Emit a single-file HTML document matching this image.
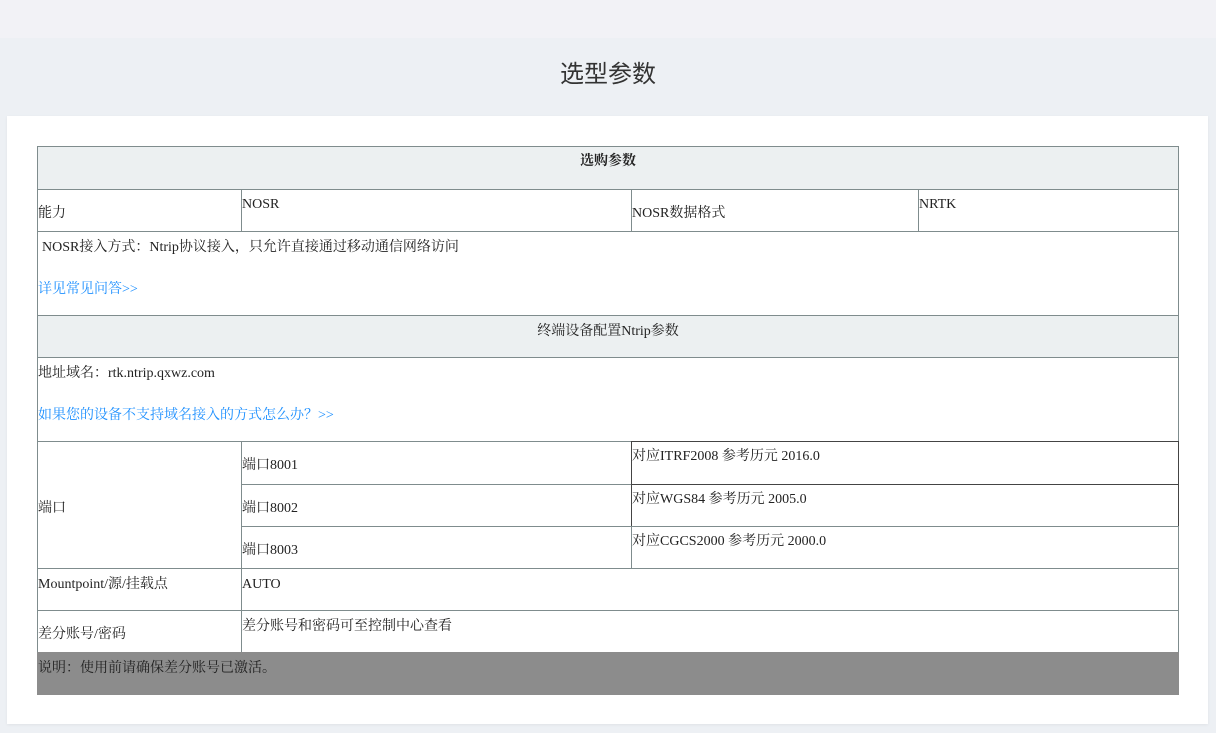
<!DOCTYPE html>
<html><head><meta charset="utf-8"><style>
body{margin:0;width:1216px;height:733px;background:#edf0f4;position:relative;overflow:hidden;font-family:"Liberation Serif","Noto Serif CJK SC",serif;font-size:14px;color:#222}
.a{position:absolute}
.top{left:0;top:0;width:1216px;height:38px;background:#f2f2f6}
.card{left:7px;top:116px;width:1201px;height:608px;background:#fff;box-shadow:0 1px 3px rgba(0,0,0,.06)}
.h{left:0;top:38px;width:1216px;height:78px;text-align:center;font:24px "Liberation Sans","Noto Sans CJK SC",sans-serif;line-height:74px;color:#333}
.bx{position:absolute;border:1px solid #7f8c8d;box-sizing:border-box}
.t{position:absolute;white-space:nowrap;line-height:16px;padding-top:2px}
.l{color:#1e90ff}
</style></head><body>
<div class="a top"></div>
<div class="a h">选型参数</div>
<div class="a card"></div>
<div class="bx" style="left:37px;top:146px;width:1142px;height:44px;background:#ecf0f1"></div>
<div class="bx" style="left:37px;top:189px;width:205px;height:43px"></div>
<div class="bx" style="left:241px;top:189px;width:391px;height:43px"></div>
<div class="bx" style="left:631px;top:189px;width:288px;height:43px"></div>
<div class="bx" style="left:918px;top:189px;width:261px;height:43px"></div>
<div class="bx" style="left:37px;top:231px;width:1142px;height:85px"></div>
<div class="bx" style="left:37px;top:315px;width:1142px;height:43px;background:#ecf0f1"></div>
<div class="bx" style="left:37px;top:357px;width:1142px;height:85px"></div>
<div class="bx" style="left:37px;top:441px;width:205px;height:128px"></div>
<div class="bx" style="left:241px;top:441px;width:391px;height:44px"></div>
<div class="bx" style="left:241px;top:484px;width:391px;height:43px"></div>
<div class="bx" style="left:241px;top:526px;width:391px;height:43px"></div>
<div class="bx" style="left:631px;top:441px;width:548px;height:44px;border-color:#444"></div>
<div class="bx" style="left:631px;top:484px;width:548px;height:43px;border-color:#444"></div>
<div class="bx" style="left:631px;top:526px;width:548px;height:43px"></div>
<div class="bx" style="left:37px;top:568px;width:205px;height:43px"></div>
<div class="bx" style="left:241px;top:568px;width:938px;height:43px"></div>
<div class="bx" style="left:37px;top:610px;width:205px;height:43px"></div>
<div class="bx" style="left:241px;top:610px;width:938px;height:43px"></div>
<div class="a" style="left:37px;top:652px;width:1142px;height:43px;background:#8c8c8c"></div>
<div class="t" style="left:37px;width:1142px;text-align:center;top:152px;font-weight:bold">选购参数</div>
<div class="t" style="left:38px;top:204px">能力</div>
<div class="t" style="left:242px;top:195px">NOSR</div>
<div class="t" style="left:632px;top:204px">NOSR数据格式</div>
<div class="t" style="left:919px;top:195px">NRTK</div>
<div class="t" style="left:42px;top:238px">NOSR接入方式：Ntrip协议接入，只允许直接通过移动通信网络访问</div>
<div class="t l" style="left:38px;top:280px">详见常见问答&gt;&gt;</div>
<div class="t" style="left:37px;width:1142px;text-align:center;top:322px">终端设备配置Ntrip参数</div>
<div class="t" style="left:38px;top:364px">地址域名：rtk.ntrip.qxwz.com</div>
<div class="t l" style="left:38px;top:406px">如果您的设备不支持域名接入的方式怎么办？&gt;&gt;</div>
<div class="t" style="left:38px;top:499px">端口</div>
<div class="t" style="left:242px;top:456px">端口8001</div>
<div class="t" style="left:242px;top:499px">端口8002</div>
<div class="t" style="left:242px;top:541px">端口8003</div>
<div class="t" style="left:632px;top:447px">对应ITRF2008 参考历元 2016.0</div>
<div class="t" style="left:632px;top:490px">对应WGS84 参考历元 2005.0</div>
<div class="t" style="left:632px;top:532px">对应CGCS2000 参考历元 2000.0</div>
<div class="t" style="left:38px;top:575px">Mountpoint/源/挂载点</div>
<div class="t" style="left:242px;top:575px">AUTO</div>
<div class="t" style="left:38px;top:625px">差分账号/密码</div>
<div class="t" style="left:242px;top:617px">差分账号和密码可至控制中心查看</div>
<div class="t" style="left:38px;top:659px">说明：使用前请确保差分账号已激活。</div>
</body></html>
